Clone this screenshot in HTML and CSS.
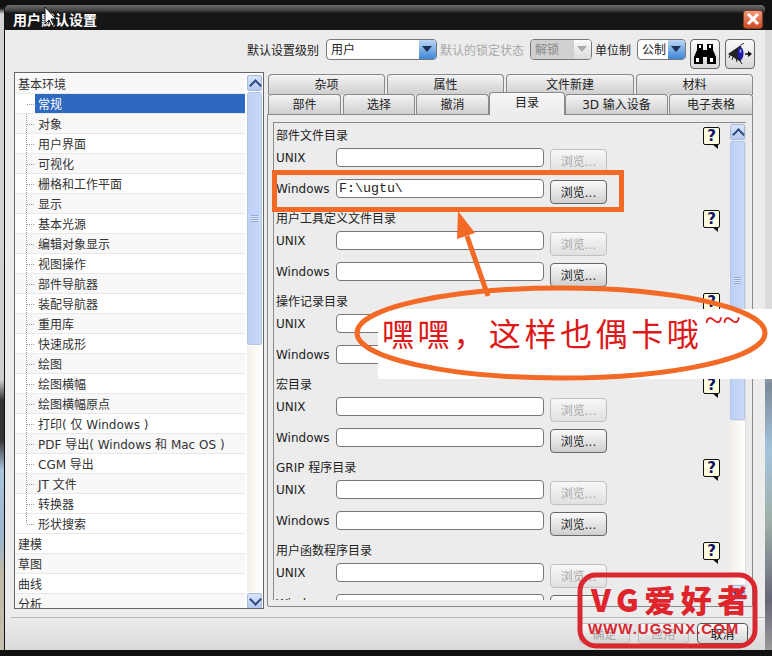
FILE: index.html
```html
<!DOCTYPE html>
<html lang="zh-CN">
<head>
    <meta charset="UTF-8">
    <title>用户默认设置</title>
    <link rel="stylesheet" href="styles.css">
</head>
<body>
    <div class="dialog">
        <div class="titlebar">
            <span class="title">用户默认设置</span>
            <span class="close"><svg width="16" height="16" viewBox="0 0 16 16"><path d="M3 3l10 10M13 3L3 13" stroke="#fff" stroke-width="3"/></svg></span>
        </div>
        <div class="toolbar">
            <span>默认设置级别</span>
            <span class="combo combo-level"><span class="combo-text">用户</span><span class="combo-btn"></span></span>
            <span class="muted">默认的锁定状态</span>
            <span class="combo combo-lock off"><span class="combo-text">解锁</span><span class="combo-btn"></span></span>
            <span>单位制</span>
            <span class="combo combo-unit"><span class="combo-text">公制</span><span class="combo-btn"></span></span>
            <button class="icon-btn"><svg width="24" height="22" viewBox="0 0 24 22"><path d="M4 1h6v6h4V1h6v6l3 7v7h-9v-7h-4v7H1v-7l3-7z" fill="#000"/><rect x="3" y="15" width="3" height="4" fill="#fff"/><rect x="17" y="15" width="3" height="4" fill="#fff"/><rect x="6" y="2" width="2" height="3" fill="#fff"/><rect x="16" y="2" width="2" height="3" fill="#fff"/></svg></button>
            <button class="icon-btn"><svg width="26" height="22" viewBox="0 0 26 22"><path d="M1 11l13-9v17z" fill="#222"/><path d="M3 12l-1 3M6 14l-1 3M9 15l1 4M12 16l3 5M14 2l3-2" stroke="#222"/><ellipse cx="13.5" cy="10.5" rx="3" ry="6.5" fill="#1c1ca8"/><ellipse cx="13.5" cy="8" rx="1" ry="2" fill="#8fa0e8"/><path d="M18 11h4" stroke="#111" stroke-width="1.5"/><path d="M25 11l-4-3v6z" fill="#111"/></svg></button>
        </div>
        <div class="main">
            <div class="tree">
                <ul class="tree-list">
                    <li>基本环境</li>
                    <li class="child selected">常规</li>
                    <li class="child">对象</li>
                    <li class="child">用户界面</li>
                    <li class="child">可视化</li>
                    <li class="child">栅格和工作平面</li>
                    <li class="child">显示</li>
                    <li class="child">基本光源</li>
                    <li class="child">编辑对象显示</li>
                    <li class="child">视图操作</li>
                    <li class="child">部件导航器</li>
                    <li class="child">装配导航器</li>
                    <li class="child">重用库</li>
                    <li class="child">快速成形</li>
                    <li class="child">绘图</li>
                    <li class="child">绘图横幅</li>
                    <li class="child">绘图横幅原点</li>
                    <li class="child">打印( 仅 Windows )</li>
                    <li class="child">PDF 导出( Windows 和 Mac OS )</li>
                    <li class="child">CGM 导出</li>
                    <li class="child">JT 文件</li>
                    <li class="child">转换器</li>
                    <li class="child last">形状搜索</li>
                    <li>建模</li>
                    <li>草图</li>
                    <li>曲线</li>
                    <li>分析</li>
                </ul>
                <div class="scrollbar tree-scroll">
                    <span class="sb-btn up"></span>
                    <span class="sb-thumb"></span>
                    <span class="sb-track"></span>
                    <span class="sb-btn down"></span>
                </div>
            </div>
            <div class="tabs-area">
                <div class="tab-row row-back">
                    <span class="tab b1">杂项</span><span class="tab b1">属性</span><span class="tab b2">文件新建</span><span class="tab b1">材料</span>
                </div>
                <div class="tab-row row-front">
                    <span class="tab t1">部件</span><span class="tab t2">选择</span><span class="tab t3">撤消</span><span class="tab t4 active">目录</span><span class="tab t5">3D 输入设备</span><span class="tab t6">电子表格</span>
                </div>
                <div class="tab-body">
                    <div class="panel">
                        <div class="groups">
                            <section class="group">
                                <h4>部件文件目录</h4>
                                <div class="row"><label>UNIX</label><span class="field"></span><button class="browse" disabled>浏览...</button></div>
                                <div class="row"><label>Windows</label><span class="field mono">F:\ugtu\</span><button class="browse">浏览...</button></div>
                            </section>
                            <section class="group">
                                <h4>用户工具定义文件目录</h4>
                                <div class="row"><label>UNIX</label><span class="field"></span><button class="browse" disabled>浏览...</button></div>
                                <div class="row"><label>Windows</label><span class="field"></span><button class="browse">浏览...</button></div>
                            </section>
                            <section class="group">
                                <h4>操作记录目录</h4>
                                <div class="row"><label>UNIX</label><span class="field"></span><button class="browse" disabled>浏览...</button></div>
                                <div class="row"><label>Windows</label><span class="field"></span><button class="browse">浏览...</button></div>
                            </section>
                            <section class="group">
                                <h4>宏目录</h4>
                                <div class="row"><label>UNIX</label><span class="field"></span><button class="browse" disabled>浏览...</button></div>
                                <div class="row"><label>Windows</label><span class="field"></span><button class="browse">浏览...</button></div>
                            </section>
                            <section class="group">
                                <h4>GRIP 程序目录</h4>
                                <div class="row"><label>UNIX</label><span class="field"></span><button class="browse" disabled>浏览...</button></div>
                                <div class="row"><label>Windows</label><span class="field"></span><button class="browse">浏览...</button></div>
                            </section>
                            <section class="group">
                                <h4>用户函数程序目录</h4>
                                <div class="row"><label>UNIX</label><span class="field"></span><button class="browse" disabled>浏览...</button></div>
                                <div class="row"><label>Windows</label><span class="field"></span><button class="browse">浏览...</button></div>
                            </section>
                        </div>
                        <div class="helps">
                            <span class="help">?</span><span class="help">?</span><span class="help">?</span><span class="help">?</span><span class="help">?</span><span class="help">?</span>
                        </div>
                        <div class="scrollbar panel-scroll">
                            <span class="sb-btn up"></span>
                            <span class="sb-thumb"></span>
                            <span class="sb-track"></span>
                            <span class="sb-btn down"></span>
                        </div>
                    </div>
                </div>
            </div>
        </div>
        <div class="footer">
            <button class="foot-btn" disabled>确定</button>
            <button class="foot-btn" disabled>应用</button>
            <button class="foot-btn">取消</button>
        </div>
    </div>

    <!-- annotation drawn over the screenshot -->
    <svg class="notes" width="772" height="656" viewBox="0 0 772 656">
        <path d="M45 7v17l4-4 3 6 2-1-3-6h5z" fill="#fff" stroke="#111"/>
        <rect x="378" y="309" width="394" height="70" fill="#fff"/>
        <rect x="274.5" y="172.5" width="347" height="37" class="note-line"/>
        <path d="M488 296L467 236" class="note-line"/>
        <path d="M458 211L475 233L457 239z" fill="#f26a26"/>
        <ellipse cx="561" cy="333" rx="204" ry="45" class="note-line"/>
        <text x="382" y="346" class="note-text">嘿嘿，这样也偶卡哦</text>
        <text x="705" y="331" class="note-tilde">~~</text>
        <rect x="580" y="575" width="175" height="71" rx="16" class="logo-box"/>
        <text x="591" y="612" class="logo-main">VG爱好者</text>
        <text x="588" y="634" class="logo-url">WWW.UGSNX.COM</text>
    </svg>
</body>
</html>
```

FILE: styles.css
```css
* {
    box-sizing: border-box;
}
html, body {
    margin: 0;
    height: 656px;
    overflow: hidden;
}
body {
    position: relative;
    padding: 5px 7px 6px 5px;
    background:
        linear-gradient(#111 0 8px, #d4d4d4 14px, #cfcfcf 380px, #333 400px, #333 440px, #a9c4de 470px, #9ab4cc 540px, #bdb8a8 570px, #c4bfae 650px, #111 650px) 0 0 / 4px 100% no-repeat,
        linear-gradient(#111 0 30px, #dcdcdc 30px, #dcdcdc 350px, #7d8b99 385px, #a4c4dc 450px, #9fb0a8 520px, #667 600px, #999 650px, #111 650px) 100% 0 / 7px 100% no-repeat,
        #111;
    font-family: "DejaVu Sans", "Noto Sans CJK SC", sans-serif;
    font-size: 12px;
    color: #222;
}
.dialog {
    height: 645px;
    display: flex;
    flex-direction: column;
    background: #ececec;
    border-radius: 5px 5px 0 0;
    overflow: hidden;
}
.titlebar {
    height: 25px;
    flex: none;
    display: flex;
    align-items: center;
    justify-content: space-between;
    padding: 3px 2px 0 8px;
    background: linear-gradient(#6b6b6b 0, #3c3c3c 6px, #161616 8px, #161616 100%);
}
.title {
    color: #fff;
    font-size: 14px;
    font-weight: 700;
}
.close {
    width: 20px;
    height: 19px;
    display: flex;
    align-items: center;
    justify-content: center;
    background: linear-gradient(#ef9a7c, #cf4a22);
    border: 1px solid #7a3a20;
    border-radius: 3px;
}
.toolbar {
    height: 42px;
    flex: none;
    display: flex;
    align-items: center;
    justify-content: flex-end;
    gap: 5px;
    padding: 1px 10px 5px 0;
}
.muted {
    color: #a8a8a8;
}
.combo {
    display: flex;
    height: 21px;
    background: #fff;
    border: 1px solid #777;
    border-radius: 4px;
    overflow: hidden;
}
.combo-text {
    flex: 1;
    padding-left: 4px;
    line-height: 21px;
}
.combo-btn {
    width: 17px;
    position: relative;
    background: linear-gradient(#bcd6f4, #3d86d8);
}
.combo-btn::after {
    content: "";
    position: absolute;
    left: 3px;
    top: 6px;
    border: 5px solid transparent;
    border-top: 6px solid #1c2f55;
    border-bottom: 0;
}
.combo-level {
    width: 111px;
    margin: 0 -2px 0 2px;
}
.combo-lock {
    width: 62px;
    margin: 0 -2px 0 1px;
}
.combo-lock .combo-text {
    background: #d0d0d0;
    color: #888;
}
.combo-lock .combo-btn {
    background: linear-gradient(#fafafa, #dcdcdc);
}
.combo-lock .combo-btn::after {
    border-top-color: #aaa;
}
.combo-unit {
    width: 49px;
    margin: 0 -1px 0 1px;
}
.icon-btn {
    width: 30px;
    height: 30px;
    margin-top: 10px;
    padding: 0;
    display: flex;
    align-items: center;
    justify-content: center;
    background: linear-gradient(#fafafa, #d8d8d8);
    border: 1px solid #666;
    border-radius: 4px;
}
.main {
    flex: none;
    height: 537px;
    display: flex;
    gap: 3px;
    padding: 0 10px 0 9px;
}
.tree {
    width: 250px;
    height: 537px;
    flex: none;
    display: flex;
    background: #fff;
    border: 1px solid #666;
    overflow: hidden;
}
.tree-list {
    flex: 1;
    margin: 0;
    padding: 1px 0 0;
    list-style: none;
    height: 535px;
    overflow: hidden;
}
.tree-list li {
    height: 20px;
    padding-left: 3px;
    line-height: 22px;
    border-bottom: 1px solid #e8e8e8;
    font-size: 12px;
    white-space: nowrap;
    background: #fff;
    color: #333;
}
.tree-list .child {
    padding-left: 23px;
    background:
        repeating-linear-gradient(90deg, #999 0 1px, transparent 1px 2px) 12px 10px / 7px 1px no-repeat,
        repeating-linear-gradient(#999 0 1px, transparent 1px 2px) 11px 0 / 1px 100% no-repeat,
        #fff;
}
.tree-list .child.last {
    background:
        repeating-linear-gradient(90deg, #999 0 1px, transparent 1px 2px) 12px 10px / 7px 1px no-repeat,
        repeating-linear-gradient(#999 0 1px, transparent 1px 2px) 11px 0 / 1px 10px no-repeat,
        #fff;
}
.tree-list .child.selected {
    background:
        linear-gradient(#2f69bf, #2f69bf) 20px 0 / 100% 100% no-repeat,
        repeating-linear-gradient(90deg, #999 0 1px, transparent 1px 2px) 12px 10px / 7px 1px no-repeat,
        #fff;
    color: #fff;
}
.tree-list li:nth-child(odd) {
    background-color: #f8f8f8;
}
.scrollbar {
    width: 15px;
    flex: none;
    display: flex;
    flex-direction: column;
    gap: 1px;
}
.tree-scroll {
    height: 534px;
    margin: 2px 1px 0 2px;
}
.sb-btn {
    height: 16px;
    flex: none;
    position: relative;
    background: linear-gradient(#d8e4fb, #b4c8f0);
    border: 1px solid #a9b9d8;
    border-radius: 2px;
}
.sb-btn::after {
    content: "";
    position: absolute;
    left: 3px;
    width: 7px;
    height: 7px;
    border-left: 2px solid #2d4a80;
    border-top: 2px solid #2d4a80;
    transform: rotate(45deg);
    top: 5px;
}
.sb-btn.down::after {
    transform: rotate(225deg);
    top: 1px;
}
.sb-thumb {
    height: 253px;
    flex: none;
    display: flex;
    align-items: center;
    justify-content: center;
    background: linear-gradient(90deg, #bdd0f5, #c8d8f8);
    border: 1px solid #b3c4e6;
    border-radius: 2px;
}
.sb-thumb::after {
    content: "";
    width: 7px;
    height: 7px;
    background: repeating-linear-gradient(#8fa8d8 0 1px, #dfe8fb 1px 2px);
}
.sb-track {
    flex: 1;
    background: linear-gradient(90deg, #f3efe6, #fff);
}
.tabs-area {
    width: 486px;
    margin-top: 2px;
    display: flex;
    flex-direction: column;
}
.tab-row {
    display: flex;
    height: 20px;
    flex: none;
}
.tab {
    height: 21px;
    text-align: center;
    background: linear-gradient(#f4f4f4, #cdcdcd);
    border: 1px solid #8a8a8a;
    border-bottom: 0;
    border-radius: 4px 4px 0 0;
}
.row-back {
    gap: 2px;
    padding-left: 1px;
}
.row-back .tab {
    line-height: 21px;
}
.b1 { width: 117px; }
.b2 { width: 128px; }
.row-front .tab {
    line-height: 20px;
}
.t1 { width: 73px; margin-left: 1px; }
.t2 { width: 72px; margin-left: 2px; }
.t3 { width: 73px; margin-left: 1px; }
.row-front .t4 {
    width: 76px;
    height: 23px;
    margin-top: -2px;
    background: linear-gradient(#f6f6f6, #ececec);
    position: relative;
    z-index: 1;
}
.t5 { width: 103px; }
.t6 { width: 84px; margin-left: 1px; }
.tab-body {
    height: 493px;
    flex: none;
    padding: 7px 6px 6px 5px;
    background: #ececec;
    border: 1px solid #8a8a8a;
    border-radius: 0 0 2px 2px;
    overflow: hidden;
}
.panel {
    position: relative;
    height: 100%;
    padding-right: 22px;
    border: 1px solid #8a8a8a;
    border-right-color: #ddd;
    border-bottom: 0;
    overflow: hidden;
}
.groups {
    padding: 2px 0 0 2px;
}
.group {
    height: 83px;
}
.group h4 {
    margin: 0;
    height: 17px;
    font-size: 12px;
    font-weight: 400;
    line-height: 22px;
}
.row {
    display: flex;
    align-items: center;
    height: 31px;
}
.row label {
    width: 60px;
    flex: none;
    font-size: 12px;
}
.field {
    width: 208px;
    height: 19px;
    flex: none;
    background: #fff;
    border: 1px solid #777;
    border-radius: 4px;
}
.mono {
    padding-left: 2px;
    font-family: "Liberation Mono", monospace;
    font-size: 13.3px;
    line-height: 17px;
}
.browse {
    width: 57px;
    height: 24px;
    margin: 6px 0 0 6px;
    padding: 0;
    font: inherit;
    color: #222;
    background: linear-gradient(#fbfbfb, #cfcfcf);
    border: 1px solid #666;
    border-radius: 4px;
}
.browse:disabled {
    color: #a8a8a8;
    background: linear-gradient(#f8f8f8, #e0e0e0);
    border-color: #c0c0c0;
}
.helps {
    position: absolute;
    top: 4px;
    right: 25px;
    display: flex;
    flex-direction: column;
    gap: 65px;
}
.help {
    position: relative;
    width: 17px;
    height: 18px;
    text-align: center;
    font-size: 15px;
    font-weight: 700;
    line-height: 16px;
    color: #11116a;
    background: radial-gradient(#e6d860 35%, transparent 36%) 0 0 / 2px 2px, #fffde0;
    border: 1px solid #111;
    border-radius: 2px;
}
.help::after {
    content: "";
    position: absolute;
    right: 1px;
    top: 16px;
    border-left: 6px solid transparent;
    border-top: 5px solid #111;
}
.panel-scroll {
    position: absolute;
    top: 1px;
    right: 0;
    height: 100%;
}
.panel-scroll .sb-thumb {
    height: 279px;
}
.footer {
    height: 33px;
    flex: none;
    margin-top: 8px;
    display: flex;
    justify-content: flex-end;
    gap: 8px;
    padding: 6px 17px 0 0;
    background:
        linear-gradient(#bbb, #bbb) 6px 0 / 100% 1px no-repeat,
        linear-gradient(#ececec, #dadada);
}
.foot-btn {
    width: 51px;
    height: 21px;
    padding: 0;
    font: inherit;
    color: #111;
    background: linear-gradient(#fbfbfb, #d4d4d4);
    border: 1px solid #555;
    border-radius: 4px;
}
.foot-btn:disabled {
    color: #a8a8a8;
    border-color: #bbb;
}
.notes {
    position: absolute;
    left: 0;
    top: 0;
}
.note-line {
    fill: none;
    stroke: #f26a26;
    stroke-width: 5;
}
.note-text {
    font-family: "Noto Sans CJK SC", sans-serif;
    font-size: 32px;
    letter-spacing: 3.6px;
    fill: #dc1818;
}
.note-tilde {
    font-family: "Liberation Serif", serif;
    font-size: 33px;
    fill: #dc1818;
}
.logo-box {
    fill: none;
    stroke: #d9282f;
    stroke-width: 5;
}
.logo-main {
    font-family: "Noto Sans CJK SC", sans-serif;
    font-size: 31px;
    font-weight: 900;
    letter-spacing: 5.5px;
    fill: #e0242c;
}
.logo-url {
    font-family: "Liberation Sans", sans-serif;
    font-size: 15px;
    font-weight: 700;
    letter-spacing: 1px;
    fill: #d9282f;
}
```
